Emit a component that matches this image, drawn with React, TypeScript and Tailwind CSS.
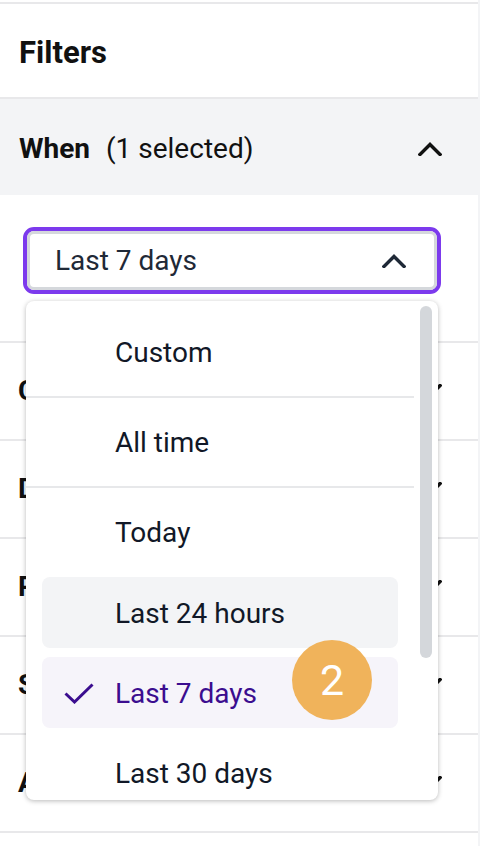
import React from "react";

function ChevronUp({ className }: { className?: string }) {
  return (
    <svg className={className} width="24" height="14" viewBox="0 0 24 14" fill="none">
      <path d="M2 12.5 12 2.5l10 10" stroke="currentColor" strokeWidth="3.4" strokeLinecap="square" strokeLinejoin="miter" />
    </svg>
  );
}

function ChevronDown({ className }: { className?: string }) {
  return (
    <svg className={className} width="24" height="14" viewBox="0 0 24 14" fill="none">
      <path d="M2 1.5 12 11.5 22 1.5" stroke="currentColor" strokeWidth="3.4" strokeLinecap="square" strokeLinejoin="miter" />
    </svg>
  );
}

function Check() {
  return (
    <svg width="30" height="21" viewBox="0 0 30 21" fill="none">
      <path d="M1.5 10.5 10.5 19 28.5 1.5" stroke="currentColor" strokeWidth="3" strokeLinecap="butt" />
    </svg>
  );
}

const rows = ["Country", "Device", "Platform", "Status", "Author"];

export default function App() {
  return (
    <div className="relative w-[482px] h-[846px] bg-white overflow-hidden font-['Roboto',sans-serif] text-[#111111]">
      <div className="pt-[2px] w-[480px] h-full border-r-2 border-[#f3f4f6]">
        <div className="border-t-2 border-[#e8e8ea]">
          <div className="h-[95px] flex items-center px-[19px] pt-[3px] border-b-2 border-[#e8e8ea]">
            <span className="text-[31px] font-bold leading-none">Filters</span>
          </div>
          <div className="h-[96px] bg-[#f3f4f6] flex items-center justify-between pl-[19px] pr-[36px] pt-[4px]">
            <div className="text-[28px] leading-none flex items-baseline">
              <span className="font-bold">When</span>
              <span className="ml-[16px] text-[#111111]">(1 selected)</span>
            </div>
            <ChevronUp className="text-[#111111]" />
          </div>
          <div className="pt-[32px] pb-[47px] pl-[23px]">
            <div className="relative w-[418px]">
              <div className="h-[67px] rounded-[11px] border-[4px] border-[#7c3aed]">
                <div className="h-full rounded-[7px] border-[3px] border-[#d5d8dc] flex items-center justify-between pl-[25px] pr-[28px] text-[#1f2937]">
                  <span className="text-[28px] leading-none">Last 7 days</span>
                  <ChevronUp />
                </div>
              </div>
              <div className="absolute left-[3px] top-[74px] z-10 w-[412px] h-[499px] bg-white rounded-[8px] shadow-[0_1px_5px_rgba(0,0,0,0.28)] overflow-hidden flex">
                <div className="w-[388px] pt-[15px] text-[28px] leading-none text-[#111827]">
                  <div className="h-[71px] mx-[16px] flex items-center pl-[73px] pt-[2px]">Custom</div>
                  <div className="mt-[9px] mb-[8px] h-[2px] bg-[#e7e8ea]" />
                  <div className="h-[71px] mx-[16px] flex items-center pl-[73px] pt-[2px]">All time</div>
                  <div className="mt-[9px] mb-[8px] h-[2px] bg-[#e7e8ea]" />
                  <div className="h-[71px] mx-[16px] flex items-center pl-[73px] pt-[2px]">Today</div>
                  <div className="h-[10px]" />
                  <div className="h-[71px] mx-[16px] rounded-[8px] bg-[#f3f4f6] flex items-center pl-[73px] pt-[2px]">Last 24 hours</div>
                  <div className="h-[9px]" />
                  <div className="h-[71px] mx-[16px] rounded-[8px] bg-[#f6f4fa] flex items-center text-[#3b0d8f] pt-[2px]">
                    <div className="w-[73px] pl-[22px] flex items-center">
                      <Check />
                    </div>
                    <span>Last 7 days</span>
                  </div>
                  <div className="h-[9px]" />
                  <div className="h-[71px] mx-[16px] flex items-center pl-[73px] pt-[2px]">Last 30 days</div>
                </div>
                <div className="pt-[5px] pl-[6px]">
                  <div className="w-[12px] h-[352px] rounded-full bg-[#d4d7db]" />
                </div>
              </div>
            </div>
          </div>
          {rows.map((r) => (
            <div key={r} className="h-[98px] border-t-2 border-[#e8e8ea] flex items-center justify-between pl-[18px] pr-[36px]">
              <span className="text-[28px] font-bold leading-none">{r}</span>
              <ChevronDown className="text-[#111111]" />
            </div>
          ))}
          <div className="border-t-2 border-[#e8e8ea]" />
        </div>
      </div>
      <div className="absolute left-[292px] top-[640px] z-20 w-[80px] h-[80px] rounded-full bg-[#f0b35b] flex items-center justify-center text-white text-[43px] leading-none">
        2
      </div>
    </div>
  );
}
